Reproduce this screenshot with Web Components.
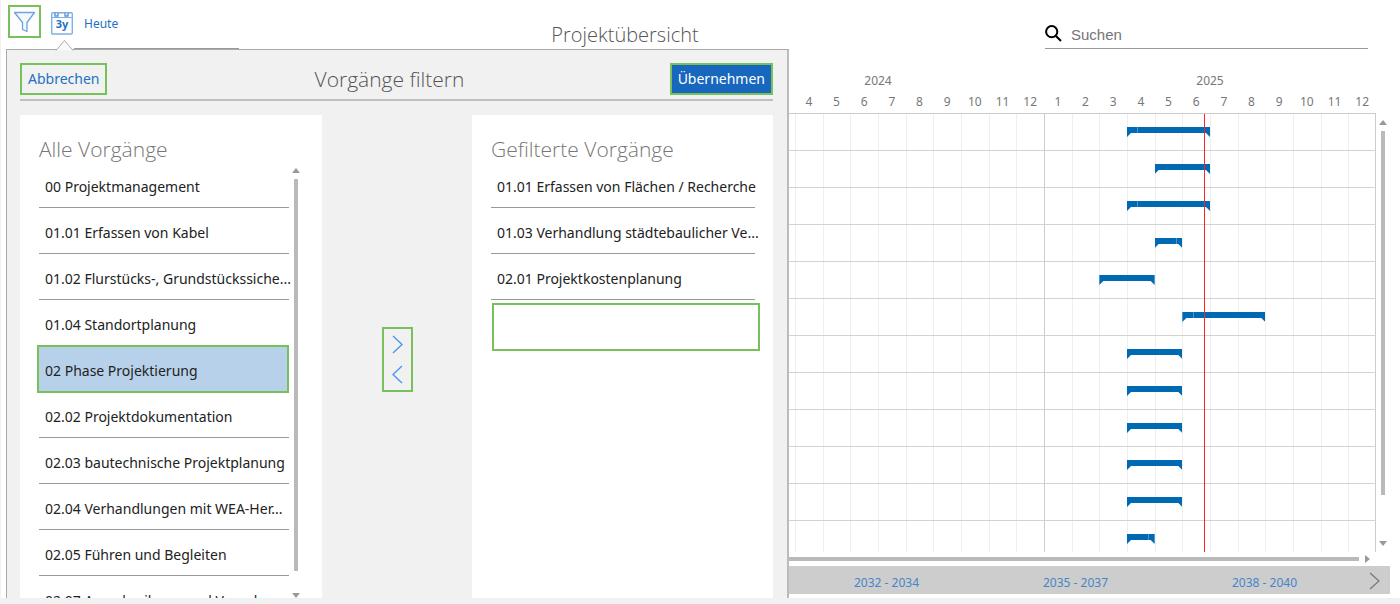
<!DOCTYPE html>
<html lang="de">
<head>
<meta charset="utf-8">
<title>Projektübersicht</title>
<style>
  html {
    --blue: #2271c3;
    --green: #78c05a;
    --panel: #f1f1f1;
    --scroll: #bababa;
  }
  body {
    margin: 0;
    min-height: 100vh;
    background: var(--panel);
    font-family: "Noto Sans", "Open Sans", sans-serif;
    font-size: 14px;
  }
</style>
</head>
<body>
<project-page></project-page>

<script>
const FILTER_ICON = `<svg width="23" height="22" viewBox="0 0 23 22" fill="#f4f8fd" stroke="#6fa3dc" stroke-width="1.3" stroke-linejoin="round" aria-hidden="true"><path d="M1.5 1.5H21.5L14 11.5V20.5L9.5 18.5V11.5Z"/></svg>`;

const CALENDAR_ICON = `<svg width="22" height="23" viewBox="0 0 22 23" aria-hidden="true"><rect x=".7" y=".7" width="20.6" height="21.3" rx="1" fill="#fff" stroke="#7fb0e2" stroke-width="1.4"/><path d="M1 5.5H21" stroke="#7fb0e2"/><path d="M4 1V4H7V1M14 1V4H17V1" fill="none" stroke="#5b97d6" stroke-width="1.4"/><text x="11" y="16" text-anchor="middle" font-family="Noto Sans, sans-serif" font-size="11" font-weight="700" fill="#2271c3">3y</text></svg>`;

const SEARCH_ICON = `<svg width="17" height="17" viewBox="0 0 17 17" fill="none" stroke="#000" stroke-width="2" aria-hidden="true"><circle cx="6.7" cy="6.7" r="5.6"/><path d="M10.7 10.7L16 16"/></svg>`;

class AppToolbar extends HTMLElement {
  constructor() {
    super();
    this.attachShadow({ mode: "open" });
  }

  connectedCallback() {
    this.shadowRoot.innerHTML = `
      <style>
        :host {
          display: grid;
          grid-template-columns: 1fr auto 1fr;
          height: 49px;
        }
        .tools {
          display: flex;
          align-items: flex-start;
          gap: 10px;
          padding: 5px 0 0 8px;
        }
        button {
          display: flex;
          align-items: center;
          justify-content: center;
          padding: 0;
          border: none;
          background: none;
          color: var(--blue);
          font: inherit;
          font-size: 12px;
          line-height: 18px;
          cursor: pointer;
        }
        .filter {
          box-sizing: border-box;
          width: 33px;
          height: 33px;
          border: 2px solid var(--green);
        }
        .today {
          gap: 11px;
          height: 36px;
        }
        .today span {
          padding-top: 2px;
        }
        h1 {
          margin: 0 150px 0 0;
          padding-top: 20px;
          width: 148px;
          color: #555;
          font: 300 20px/30px "Open Sans", "Noto Sans", sans-serif;
          text-align: center;
          white-space: nowrap;
        }
        label {
          display: flex;
          align-items: center;
          justify-self: end;
          gap: 9px;
          box-sizing: border-box;
          width: 323px;
          max-width: 100%;
          height: 30px;
          margin: 19px 32px 0 0;
          border-bottom: 1px solid #999;
        }
        input {
          flex: 1;
          min-width: 0;
          padding: 2px 0 0;
          border: none;
          outline: none;
          background: none;
          font: 15px/20px "Liberation Sans", sans-serif;
        }
        input::placeholder {
          color: #757575;
        }
      </style>
      <div class="tools">
        <button class="filter" aria-label="Filtern">${FILTER_ICON}</button>
        <button class="today">${CALENDAR_ICON}<span>Heute</span></button>
      </div>
      <h1>Projektübersicht</h1>
      <label>${SEARCH_ICON}<input type="text" placeholder="Suchen" aria-label="Suchen"></label>
    `;
  }
}

class ScrollTrack extends HTMLElement {
  constructor() {
    super();
    this.attachShadow({ mode: "open" });
  }

  connectedCallback() {
    this.shadowRoot.innerHTML = `
      <style>
        :host {
          display: flex;
          flex-direction: column;
          align-items: center;
          width: 8px;
        }
        .up, .down {
          border: 4px solid transparent;
        }
        .up {
          border-top: none;
          border-bottom: 5px solid #999;
        }
        .down {
          border-bottom: none;
          border-top: 5px solid #999;
        }
        .thumb {
          flex: 1;
          width: 4px;
          margin: 6px 0 var(--rest, 22px);
          background: var(--scroll);
        }
      </style>
      <div class="up"></div>
      <div class="thumb"></div>
      <div class="down"></div>
    `;
  }
}

class TaskList extends HTMLElement {
  constructor() {
    super();
    this.attachShadow({ mode: "open" });
  }

  connectedCallback() {
    const items = (this.getAttribute("items") || "").split("|");
    const selected = this.getAttribute("selected");
    this.shadowRoot.innerHTML = `
      <style>
        :host {
          display: flex;
          flex-direction: column;
          box-sizing: border-box;
          min-height: 0;
          padding: 17px 18px 0 19px;
          background: #fff;
          overflow: hidden;
        }
        h3 {
          margin: 0;
          color: #777;
          font: 300 21px/34px "Open Sans", "Noto Sans", sans-serif;
        }
        .body {
          display: flex;
          flex: 1;
          min-height: 0;
        }
        ul {
          flex: 1;
          min-width: 0;
          margin: -4px 0 0;
          padding: 0;
          list-style: none;
        }
        li {
          display: flex;
          height: 46px;
        }
        button {
          flex: 1;
          min-width: 0;
          padding: 4px 0 0 6px;
          border: none;
          border-bottom: 1px solid #999;
          background: none;
          color: #222;
          font: inherit;
          line-height: 20px;
          text-align: left;
          white-space: nowrap;
        }
        .selected button {
          margin: -1px 0 -1px -2px;
          border: 2px solid var(--green);
          background: #b8d1ea;
        }
        .drop {
          box-sizing: border-box;
          height: 48px;
          margin: 3px -5px 0 1px;
          border: 2px solid var(--green);
        }
      </style>
      <h3><slot></slot></h3>
      <div class="body">
        <ul>
          ${items.map((t) => `<li class="${t === selected ? "selected" : ""}"><button>${t}</button></li>`).join("")}
          ${this.hasAttribute("drop") ? `<li class="drop"></li>` : ""}
        </ul>
        <slot name="scroll"></slot>
      </div>
    `;
  }
}

class FilterPanel extends HTMLElement {
  constructor() {
    super();
    this.attachShadow({ mode: "open" });
  }

  connectedCallback() {
    this.shadowRoot.innerHTML = `
      <style>
        :host {
          display: flex;
          flex-direction: column;
          box-sizing: border-box;
          padding: 13px 14px 0 13px;
          border: 1px solid #aaa;
          border-right: 2px solid #bbb;
          border-bottom: none;
          background: var(--panel);
        }
        .pointer {
          position: absolute;
          left: 48px;
          top: -11px;
        }
        .edge {
          position: absolute;
          left: 67px;
          top: -2px;
          width: 165px;
          height: 1px;
          background: #999;
        }
        header {
          display: grid;
          grid-template-columns: 1fr auto 1fr;
          align-items: start;
          height: 36px;
          border-bottom: 2px solid #bfbfbf;
        }
        h2 {
          margin: 0 14px 0 0;
          color: #555;
          font: 300 21px/32px "Open Sans", "Noto Sans", sans-serif;
        }
        button {
          justify-self: start;
          padding: 0 6px;
          border: 2px solid var(--green);
          background: none;
          color: var(--blue);
          font: inherit;
          line-height: 28px;
          cursor: pointer;
        }
        .apply {
          justify-self: end;
          background: #1667bd;
          color: #fff;
        }
        .lists {
          display: grid;
          grid-template-columns: 302px 1fr 301px;
          flex: 1;
          min-height: 0;
          margin-top: 14px;
        }
        .move {
          display: flex;
          flex-direction: column;
          justify-self: center;
          align-self: start;
          box-sizing: border-box;
          width: 31px;
          height: 65px;
          margin-top: 212px;
          border: 2px solid var(--green);
        }
        .move button {
          display: flex;
          flex: 1;
          align-items: center;
          align-self: center;
          justify-content: center;
          padding: 0;
          border: none;
        }
        scroll-track {
          margin: 2px 4px 0 3px;
        }
      </style>
      <svg class="pointer" width="20" height="12" viewBox="0 0 20 12" aria-hidden="true"><path d="M1 11.5L9.5 1.5L18 11.5" fill="#f9f9f9" stroke="#aaa"/></svg>
      <div class="edge"></div>
      <header>
        <button>Abbrechen</button>
        <h2>Vorgänge filtern</h2>
        <button class="apply">Übernehmen</button>
      </header>
      <div class="lists">
        <task-list
          selected="02 Phase Projektierung"
          items="00 Projektmanagement|01.01 Erfassen von Kabel|01.02 Flurstücks-, Grundstückssiche...|01.04 Standortplanung|02 Phase Projektierung|02.02 Projektdokumentation|02.03 bautechnische Projektplanung|02.04 Verhandlungen mit WEA-Her...|02.05 Führen und Begleiten|02.07 Ausschreibung und Vergabe"
        >Alle Vorgänge<scroll-track slot="scroll"></scroll-track></task-list>
        <div class="move">
          <button aria-label="Hinzufügen"><svg width="11" height="19" viewBox="0 0 11 19" fill="none" stroke="#4c97ea" stroke-width="1.4"><path d="M1 1L10 9.5L1 18"/></svg></button>
          <button aria-label="Entfernen"><svg width="11" height="19" viewBox="0 0 11 19" fill="none" stroke="#4c97ea" stroke-width="1.4"><path d="M10 1L1 9.5L10 18"/></svg></button>
        </div>
        <task-list drop
          items="01.01 Erfassen von Flächen / Recherche|01.03 Verhandlung städtebaulicher Ve...|02.01 Projektkostenplanung"
        >Gefilterte Vorgänge</task-list>
      </div>
    `;
  }
}

// first and last month are 1-based, counted from January 2024
const BARS = [
  { from: 16, to: 18, tick: "12%" },
  { from: 17, to: 18 },
  { from: 16, to: 18, tick: "12%" },
  { from: 17, to: 17, tick: "76%" },
  { from: 15, to: 16 },
  { from: 18, to: 20, tick: "13%" },
  { from: 16, to: 17 },
  { from: 16, to: 17 },
  { from: 16, to: 17 },
  { from: 16, to: 17 },
  { from: 16, to: 17 },
  { from: 16, to: 16, tick: "76%" },
];

class GanttChart extends HTMLElement {
  constructor() {
    super();
    this.attachShadow({ mode: "open" });
  }

  connectedCallback() {
    this.render();
  }

  renderMonths() {
    let out = "";
    for (let i = 0; i < 24; i++) {
      // the first quarter lies under the filter panel
      out += `<span>${i < 3 ? "" : (i % 12) + 1}</span>`;
    }
    return out;
  }

  renderBar({ from, to, tick }) {
    const mark = tick ? `<i style="left:${tick}"></i>` : "";
    return `<div class="row"><div class="bar" style="grid-column:${from}/${to + 1}">${mark}</div></div>`;
  }

  render() {
    this.shadowRoot.innerHTML = `
      <style>
        :host {
          display: grid;
          grid-template-columns: 1fr 14px;
          grid-template-rows: auto 1fr auto auto;
          padding: 22px 10px 4px 712px;
          color: #777;
          font-size: 12px;
        }
        .years {
          display: grid;
          grid-template-columns: 1fr 1fr;
          line-height: 20px;
          text-align: center;
        }
        .months, .row, .lines {
          display: grid;
          grid-template-columns: repeat(24, 1fr);
        }
        .months {
          height: 22px;
          line-height: 22px;
          text-align: center;
        }
        .plot {
          grid-column: 1;
          position: relative;
          height: 439px;
          overflow: hidden;
          border-top: 1px solid #ccc;
          box-sizing: border-box;
        }
        .lines {
          position: absolute;
          inset: 0;
        }
        .lines div {
          border-left: 1px solid #eee;
        }
        .lines div:nth-child(13) {
          border-left-color: #ccc;
        }
        .lines div:last-child {
          border-right: 1px solid #ccc;
        }
        .row {
          position: relative;
          box-sizing: border-box;
          height: 37px;
          padding-top: 13px;
          border-bottom: 1px solid #d2d2d2;
        }
        .bar {
          position: relative;
          height: 10px;
          background: #0069b4;
          clip-path: polygon(0 0, 100% 0, 100% 100%, calc(100% - 4px) 6px, 4px 6px, 0 100%);
        }
        .bar i {
          position: absolute;
          top: 0;
          width: 1px;
          height: 6px;
          background: #4b93c8;
        }
        .now {
          position: absolute;
          top: 0;
          bottom: 0;
          left: 74.1%;
          width: 1px;
          background: #f22;
        }
        .vscroll {
          --rest: 46px;
          justify-self: center;
          margin: 7px 0 6px;
        }
        .hscroll {
          display: flex;
          grid-column: 1 / -1;
          align-items: center;
          gap: 6px;
          height: 14px;
          padding-right: 20px;
        }
        .hscroll div {
          flex: 1;
          height: 4px;
          background: var(--scroll);
        }
        .hscroll i {
          border: 4px solid transparent;
          border-left: 5px solid #999;
          border-right: none;
        }
        nav {
          display: grid;
          grid-column: 1 / -1;
          grid-template-columns: 1fr 1fr 1fr 31px;
          align-items: center;
          height: 28px;
          padding-left: 80px;
          background: #cdcdcd;
          text-align: center;
        }
        nav a {
          padding-top: 6px;
          color: #4585c8;
          line-height: 20px;
          text-decoration: none;
        }
        nav button {
          display: flex;
          justify-content: center;
          padding: 2px 0 0;
          border: none;
          background: none;
        }
      </style>
      <div>
        <div class="years"><span>2024</span><span>2025</span></div>
        <div class="months">${this.renderMonths()}</div>
      </div>
      <div class="plot">
        <div class="lines">${"<div></div>".repeat(24)}</div>
        ${BARS.map((bar) => this.renderBar(bar)).join("")}
        <div class="now"></div>
      </div>
      <scroll-track class="vscroll"></scroll-track>
      <div class="hscroll"><div></div><i></i></div>
      <nav>
        <a href="#">2032 - 2034</a>
        <a href="#">2035 - 2037</a>
        <a href="#">2038 - 2040</a>
        <button aria-label="Weiter"><svg width="11" height="18" viewBox="0 0 11 18" fill="none" stroke="#777" stroke-width="1.2"><path d="M1 1L10 9L1 17"/></svg></button>
      </nav>
    `;
  }
}

class ProjectPage extends HTMLElement {
  constructor() {
    super();
    this.attachShadow({ mode: "open" });
  }

  connectedCallback() {
    this.shadowRoot.innerHTML = `
      <style>
        :host {
          display: block;
          position: relative;
          background: #fff;
          box-shadow: inset 1px 0 var(--panel);
        }
        filter-panel {
          position: absolute;
          left: 6px;
          top: 49px;
          bottom: 0;
          width: 783px;
        }
      </style>
      <app-toolbar></app-toolbar>
      <gantt-chart></gantt-chart>
      <filter-panel></filter-panel>
    `;
  }
}

customElements.define("app-toolbar", AppToolbar);
customElements.define("scroll-track", ScrollTrack);
customElements.define("task-list", TaskList);
customElements.define("filter-panel", FilterPanel);
customElements.define("gantt-chart", GanttChart);
customElements.define("project-page", ProjectPage);
</script>
</body>
</html>
